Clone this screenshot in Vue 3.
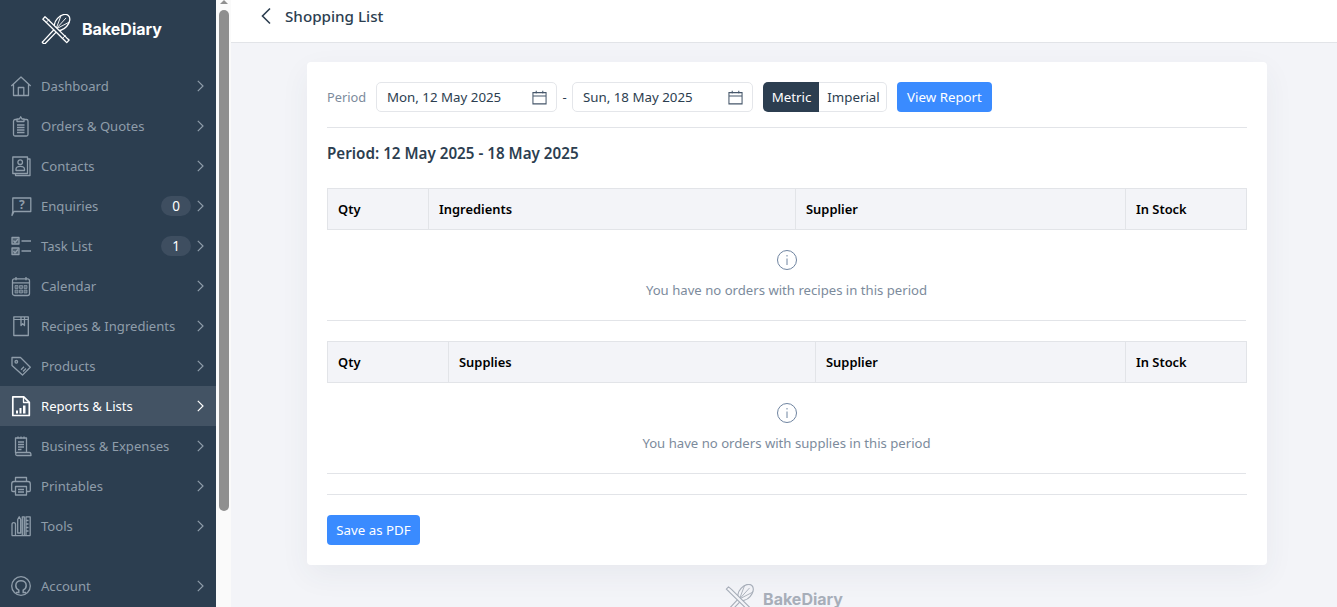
<script setup>
const navItems = [
  { label: 'Dashboard', icon: 'home' },
  { label: 'Orders & Quotes', icon: 'orders' },
  { label: 'Contacts', icon: 'contacts' },
  { label: 'Enquiries', icon: 'enquiries', badge: 0 },
  { label: 'Task List', icon: 'tasks', badge: 1 },
  { label: 'Calendar', icon: 'calendar' },
  { label: 'Recipes & Ingredients', icon: 'recipes' },
  { label: 'Products', icon: 'products' },
  { label: 'Reports & Lists', icon: 'reports', active: true },
  { label: 'Business & Expenses', icon: 'business' },
  { label: 'Printables', icon: 'printables' },
  { label: 'Tools', icon: 'tools' },
]

const sections = [
  { name: 'ingredients', title: 'Ingredients', qty: 101, main: 367, supplier: 330, empty: 'You have no orders with recipes in this period' },
  { name: 'supplies', title: 'Supplies', qty: 121, main: 367, supplier: 310, empty: 'You have no orders with supplies in this period' },
]
</script>

<template>
  <div class="page">
    <aside class="sidebar">
      <div class="brand">
        <svg class="brand-mark" viewBox="0 0 32 32" fill="none" stroke="#fff" stroke-width="1.400" stroke-linecap="round" stroke-linejoin="round">
          <path d="M2 30 16 15M5 31.500 18.500 17.500" />
          <path d="M2 30Q2.500 32 5 31.500" />
          <ellipse cx="23" cy="9" rx="6.500" ry="10" transform="rotate(42 23 9)" />
          <path d="M16.500 16 22 1.500M16.500 16 31 8.500M16.500 16 27 4.500" stroke-width="1" />
          <path d="M2.500 5.500 4.800 3 8 5.800 28 25.500 30.500 27.800 28 30.500 25.500 28 5.500 8.300Z" fill="#2c3e50" />
          <path d="M6 9 9 6M23.500 26 26.500 23" stroke-width="1" />
        </svg>
        <span class="brand-name">BakeDiary</span>
      </div>

      <nav class="nav">
        <a v-for="item in navItems" :key="item.label" class="nav-item" :class="{ active: item.active }">
          <svg class="nav-icon" viewBox="0 0 20 20" fill="none" stroke="currentColor" stroke-width="1.300" stroke-linejoin="round">
            <template v-if="item.icon === 'home'">
              <path d="M0.300 10 10 1 19.700 10M2.500 8v11.500h15V8" />
              <path d="M7.300 19.500V11.500h5.500v8" />
            </template>
            <template v-else-if="item.icon === 'orders'">
              <path d="M6 3.500H4A1.800 1.800 0 0 0 2.500 5v13.500A1.500 1.500 0 0 0 4 20h11.500a1.500 1.500 0 0 0 1.500-1.500V5a1.500 1.500 0 0 0-1.500-1.500H13" />
              <path d="M6 5.500V3h2.300L9.700 .8 11 3h2v2.500Z" />
              <path d="M6 9h7.500M6 11.500h7.500M6 14h7.500M6 16.500h7.500" />
            </template>
            <template v-else-if="item.icon === 'contacts'">
              <rect x="1.800" y="1" width="14.700" height="16.500" />
              <path d="M16.500 3h2.500v16.500H4.500v-2" />
              <circle cx="9.200" cy="6.200" r="2.300" />
              <path d="M5 14.500v-1.300c0-3.800 8.500-3.800 8.500 0v1.300Z" />
            </template>
            <template v-else-if="item.icon === 'enquiries'">
              <path d="M1 19.500 1.800 15.500V2h18v13.500H3Z" />
              <text x="10.800" y="13" class="q-mark" text-anchor="middle" fill="currentColor" stroke="none">?</text>
            </template>
            <template v-else-if="item.icon === 'tasks'">
              <rect x="1" y="1.500" width="7" height="6.500" fill="currentColor" fill-opacity="0.350" />
              <rect x="1" y="12" width="7" height="6.500" fill="currentColor" fill-opacity="0.350" />
              <path d="M2.500 4.500 4 6.500 7 3M2.500 15 4 17 7 13.500M10.500 5H20M10.500 15H20" />
            </template>
            <template v-else-if="item.icon === 'calendar'">
              <rect x="1.500" y="2.800" width="17" height="16.700" rx="2" />
              <path d="M5 1v3.300M15 1v3.300M1.500 6.800h17" />
              <path d="M4 9.500h3v3H4ZM8.500 9.500h3v3h-3ZM13 9.500h3v3h-3ZM4 14h3v3H4ZM8.500 14h3v3h-3ZM13 14h3v3h-3Z" fill="currentColor" fill-opacity="0.500" stroke-width="0.700" />
            </template>
            <template v-else-if="item.icon === 'recipes'">
              <path d="M2.800 .8h14.500v18.700H2.800Z" />
              <path d="M2.800 3.500h14.500" stroke-width="1" />
              <path d="M10 1v8.500l1.700-1.700 1.800 1.700V1" />
            </template>
            <template v-else-if="item.icon === 'products'">
              <path d="M1 1.500h8.500l9.800 9.800-7.800 7.800L1 9.500Z" />
              <circle cx="5.300" cy="5.800" r="1.300" />
              <path d="M10 13.800 13 10.800M12 15.500 15 12.500" />
            </template>
            <template v-else-if="item.icon === 'reports'">
              <path d="M1.800 .8h11l5.500 5.500v13.200H1.800Z" stroke-width="1.700" />
              <path d="M12.500 1v5.500h5.500" stroke-width="1.300" />
              <path d="M5 14.500h2v3H5ZM8.500 12h2v5.500h-2ZM12 9.500h2.500v8H12Z" fill="currentColor" stroke="none" />
            </template>
            <template v-else-if="item.icon === 'business'">
              <path d="M4.500 17V2h11v14.500" />
              <path d="M7 .5v2M10 .5v2M13 .5v2M7 6h6M7 8.500h6M7 11h6M7 13.500h3.500" />
              <path d="M6 19.500c-1.800 0-1.800-3 0-3h12.500c1 0 1.500 1.500 1.500 3Z" />
            </template>
            <template v-else-if="item.icon === 'printables'">
              <path d="M4.500 5.500v-4h11v4" />
              <path d="M4 15.500H2a1.300 1.300 0 0 1-1.300-1.300V8c0-1.500 1-2.500 2.300-2.500h14c1.300 0 2.300 1 2.300 2.500v6.200a1.300 1.300 0 0 1-1.300 1.300h-2" />
              <path d="M4.500 10.500h11v8.500h-11ZM7 13.500h6M7 16h6" />
            </template>
            <template v-else-if="item.icon === 'tools'">
              <path d="M.8 19.700h18.500M1 19.700V8.500c0-2.500 3.500-2.500 3.500 0v11.200M15 19.700V.8h4.200v18.900M15.500 4.500h2M15.500 8h2M15.500 11.500h2M15.500 15h2" />
              <path d="M6.700 17V3.500L8.200 .8l1.500 2.700V17ZM11.300 19.700V.8h2v18.900" />
            </template>
          </svg>
          <span class="nav-label">{{ item.label }}</span>
          <span v-if="item.badge !== undefined" class="badge">{{ item.badge }}</span>
          <svg class="chevron" viewBox="0 0 7 12" fill="none" stroke="currentColor" stroke-width="1.200">
            <path d="M.8 .8 6 6 .8 11.200" />
          </svg>
        </a>
        <a class="nav-item account">
          <svg class="nav-icon" viewBox="0 0 20 20" fill="none" stroke="currentColor" stroke-width="1.300">
            <circle cx="10" cy="10" r="9.300" />
            <path d="M5 16.500h2.800v-2.300C5.500 13 4.800 11 4.800 9.500c0-6.500 10.400-6.500 10.400 0 0 1.500-.7 3.500-3 4.700v2.300H15" stroke-width="1.500" />
          </svg>
          <span class="nav-label">Account</span>
          <svg class="chevron" viewBox="0 0 7 12" fill="none" stroke="currentColor" stroke-width="1.200">
            <path d="M.8 .8 6 6 .8 11.200" />
          </svg>
        </a>
      </nav>
    </aside>

    <div class="scroll-track">
      <div class="scroll-arrow"></div>
      <div class="scroll-thumb"></div>
    </div>

    <main class="main">
      <header class="topbar">
        <svg class="back" viewBox="0 0 12 18" fill="none" stroke="#2c3e50" stroke-width="1.600">
          <path d="M10 1.500 2.500 9l7.500 7.500" />
        </svg>
        <h1 class="page-title">Shopping List</h1>
      </header>

      <div class="content">
        <section class="card">
          <div class="filters">
            <span class="period-label">Period</span>
            <div class="date-input">
              <span>Mon, 12 May 2025</span>
              <svg class="cal" viewBox="0 0 16 16" fill="none" stroke="#45566a" stroke-width="1.100">
                <path d="M1 2.800h14v12H1ZM1 6.500h14M4.500 .8v3M11.500 .8v3" />
              </svg>
            </div>
            <span class="dash">-</span>
            <div class="date-input">
              <span>Sun, 18 May 2025</span>
              <svg class="cal" viewBox="0 0 16 16" fill="none" stroke="#45566a" stroke-width="1.100">
                <path d="M1 2.800h14v12H1ZM1 6.500h14M4.500 .8v3M11.500 .8v3" />
              </svg>
            </div>
            <div class="units">
              <button class="unit selected">Metric</button>
              <button class="unit">Imperial</button>
            </div>
            <button class="primary view-report">View Report</button>
          </div>

          <h2 class="period-title">Period: 12 May 2025 - 18 May 2025</h2>

          <div v-for="section in sections" :key="section.name" class="report-table">
            <div class="table-head">
              <div class="cell" :style="{ width: section.qty + 'px' }">Qty</div>
              <div class="cell" :style="{ width: section.main + 'px' }">{{ section.title }}</div>
              <div class="cell" :style="{ width: section.supplier + 'px' }">Supplier</div>
              <div class="cell grow">In Stock</div>
            </div>
            <div class="empty">
              <svg class="info" viewBox="0 0 20 20" fill="none" stroke="#6f84a0" stroke-width="1">
                <circle cx="10" cy="10" r="9.500" />
                <path d="M10 8.500v6.500M10 5v1.500" />
              </svg>
              <p class="empty-text">{{ section.empty }}</p>
            </div>
          </div>

          <div class="actions">
            <button class="primary save">Save as PDF</button>
          </div>
        </section>

        <div class="footer-logo">
          <svg class="footer-mark" viewBox="0 0 32 32" fill="none" stroke="#a7aeb9" stroke-width="1.200" stroke-linecap="round" stroke-linejoin="round">
            <path d="M2 30 16 15M5 31.500 18.500 17.500" />
            <ellipse cx="23" cy="9" rx="6.500" ry="10" transform="rotate(42 23 9)" />
            <path d="M16.500 16 22 1.500M16.500 16 31 8.500M16.500 16 27 4.500" stroke-width="1" />
            <path d="M2.500 5.500 4.800 3 8 5.800 28 25.500 30.500 27.800 28 30.500 25.500 28 5.500 8.300Z" fill="#f3f4f8" />
          </svg>
          <span class="footer-name">BakeDiary</span>
        </div>
      </div>
    </main>
  </div>
</template>

<style>
html, body {
  margin: 0;
  overflow: hidden;
}
</style>

<style scoped>
* {
  box-sizing: border-box;
}

.page {
  display: flex;
  height: 607px;
  overflow: hidden;
  font-family: "Noto Sans", "Open Sans", sans-serif;
  font-size: 13.100px;
  color: #2c3e50;
  background: #f3f4f8;
}

.sidebar {
  flex: 0 0 216px;
  background: #2c3e50;
  color: #8f9daa;
}

.brand {
  display: flex;
  align-items: center;
  height: 66px;
  padding: 0 0 8px 40px;
}

.brand-mark {
  width: 31px;
  height: 30px;
}

.brand-name {
  margin-left: 11px;
  font-family: "Inter", "Liberation Sans", sans-serif;
  font-size: 16px;
  font-weight: 700;
  color: #fff;
}

.nav-item {
  display: flex;
  align-items: center;
  height: 40px;
  padding: 0 12px 0 11px;
}

.nav-item.active {
  background: #435364;
  color: #fff;
}

.account {
  margin-top: 20px;
}

.nav-icon {
  flex: none;
  width: 20px;
  height: 20px;
  overflow: visible;
}

.q-mark {
  font-size: 12px;
  font-weight: 700;
}

.nav-label {
  flex: 1;
  margin-left: 10px;
}

.badge {
  width: 30px;
  height: 20px;
  margin-right: 6px;
  border-radius: 10px;
  background: #3e4e60;
  color: #fff;
  font-size: 13.500px;
  line-height: 20px;
  text-align: center;
}

.chevron {
  flex: none;
  width: 7px;
  height: 12px;
}

.scroll-track {
  flex: 0 0 15px;
  padding: 0 2px 0 3px;
  background: #fafafa;
}

.scroll-arrow {
  width: 0;
  height: 0;
  margin: 0 auto;
  border: 4px solid transparent;
  border-top: 0;
  border-bottom-color: #8f8f8f;
}

.scroll-thumb {
  width: 10px;
  height: 501px;
  margin-top: 6px;
  border-radius: 5px;
  background: #8f8f8f;
}

.main {
  flex: 1;
  min-width: 0;
}

.topbar {
  display: flex;
  align-items: center;
  height: 43px;
  padding: 0 0 11px 29px;
  background: #fff;
  border-bottom: 1px solid #e2e4e8;
}

.back {
  width: 12px;
  height: 18px;
}

.page-title {
  margin: 0 0 0 13px;
  font-size: 15.200px;
  font-weight: 500;
}

.content {
  padding: 19px 70px 0 76px;
}

.card {
  width: 960px;
  height: 503px;
  padding: 20px;
  border-radius: 4px;
  background: #fff;
  box-shadow: 0 10px 30px rgba(44, 62, 80, 0.06);
}

.filters {
  display: flex;
  align-items: center;
  height: 46px;
  padding-bottom: 15px;
  border-bottom: 1px solid #e2e4e8;
}

.period-label {
  width: 49px;
  color: #7c8b9c;
  font-size: 12.800px;
}

.date-input {
  display: flex;
  align-items: center;
  justify-content: space-between;
  width: 181px;
  height: 30px;
  padding: 0 9px 0 10px;
  border: 1px solid #e4e6ea;
  border-radius: 5px;
  font-size: 13.300px;
}

.cal {
  width: 15px;
  height: 15px;
}

.dash {
  width: 15px;
  font-size: 13px;
  text-align: center;
}

.units {
  display: flex;
  margin-left: 10px;
  height: 30px;
}

.unit {
  width: 68px;
  padding: 0 0 0 2px;
  border: 1px solid #e4e6ea;
  border-left: 0;
  border-radius: 0 5px 5px 0;
  background: #fff;
  color: #2c3e50;
  font: inherit;
  font-size: 13.300px;
}

.unit.selected {
  width: 56px;
  padding: 0 0 0 1px;
  border: 0;
  border-radius: 5px 0 0 5px;
  background: #2c3e50;
  color: #fff;
}

.primary {
  height: 30px;
  padding: 0;
  border: 0;
  border-radius: 4px;
  background: #3a8bff;
  color: #fff;
  font: inherit;
  font-size: 13.300px;
}

.view-report {
  width: 95px;
  margin-left: 10px;
}

.period-title {
  height: 60px;
  margin: 0;
  padding-top: 14px;
  font-size: 15.200px;
  font-weight: 600;
  line-height: 22px;
}

.report-table {
  margin-bottom: 20px;
}

.table-head {
  display: flex;
  height: 42px;
  border: 1px solid #e2e4e8;
  background: #f3f4f8;
}

.cell {
  padding-left: 10px;
  border-right: 1px solid #e2e4e8;
  color: #000;
  font-size: 12.900px;
  font-weight: 600;
  line-height: 40px;
}

.cell.grow {
  flex: 1;
  border-right: 0;
}

.empty {
  display: flex;
  flex-direction: column;
  align-items: center;
  width: 919px;
  height: 91px;
  padding-top: 20px;
  border-bottom: 1px solid #e2e4e8;
}

.info {
  width: 20px;
  height: 20px;
}

.empty-text {
  margin: 11px 0 0;
  color: #7c8b9c;
  font-size: 13.150px;
  line-height: 18px;
}

.actions {
  padding-top: 20px;
  border-top: 1px solid #e2e4e8;
}

.save {
  width: 93px;
}

.footer-logo {
  display: flex;
  align-items: flex-start;
  justify-content: center;
  width: 960px;
  height: 70px;
  margin-top: 19px;
  padding-right: 7px;
}

.footer-mark {
  width: 30px;
  height: 30px;
}

.footer-name {
  margin-left: 9px;
  margin-top: 5px;
  color: #a7aeb9;
  font-family: "Inter", "Liberation Sans", sans-serif;
  font-size: 16px;
  font-weight: 700;
}
</style>
